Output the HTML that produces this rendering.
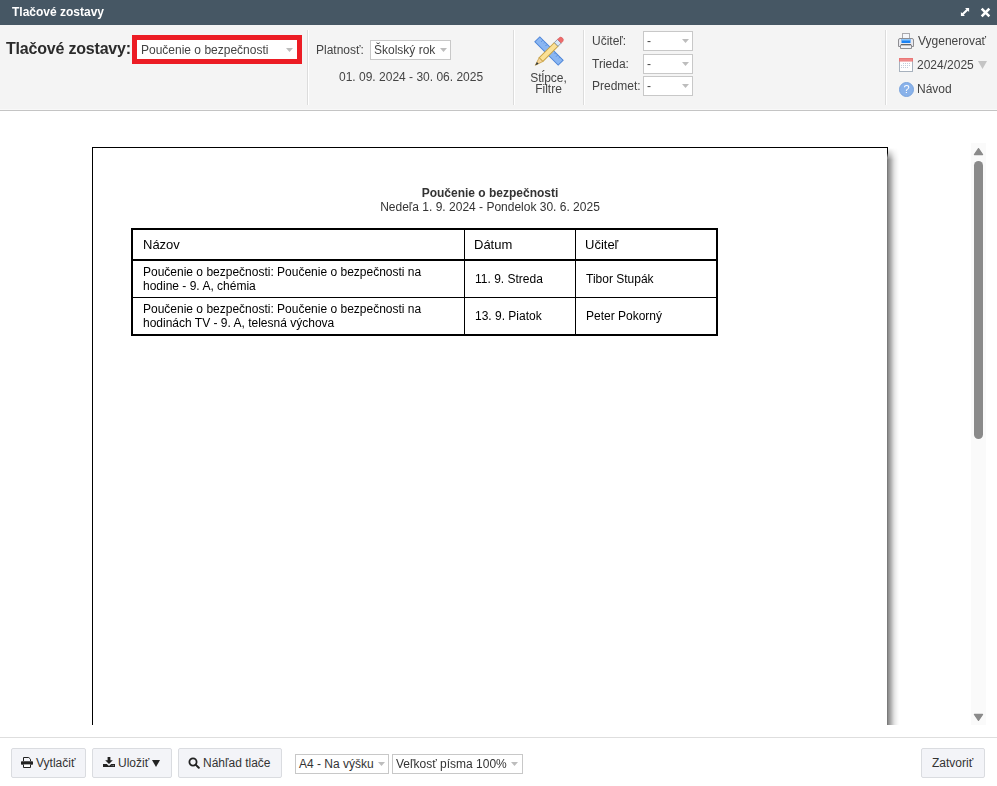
<!DOCTYPE html>
<html><head><meta charset="utf-8">
<style>
*{box-sizing:border-box;margin:0;padding:0}
html,body{width:997px;height:786px;overflow:hidden;background:#fff;font-family:"Liberation Sans",sans-serif;font-size:12px;color:#333}
.a{position:absolute;white-space:nowrap}
.gl{position:absolute;left:0;top:0;width:997px;height:786px;will-change:transform}
.t12{position:absolute;white-space:nowrap;font-size:12px;line-height:14px;color:#444}
.sep{position:absolute;width:2px;top:30px;height:75px;border-left:1px solid #dcdcdc;border-right:1px solid #fff}
.box{position:absolute;background:#fff;border:1px solid #c8c8c8}
.arr{position:absolute;width:7px;height:4px;background:#bdbdbd;clip-path:polygon(0 0,100% 0,50% 100%)}
.blk{position:absolute;background:#000}
.tx13{position:absolute;white-space:nowrap;font-size:13px;line-height:15px;color:#000}
.tx12{position:absolute;white-space:nowrap;font-size:12px;line-height:14px;color:#000}
.btn{position:absolute;top:748px;height:30px;background:#f3f4f8;border:1px solid #dadce0;border-radius:2px}
.ft{position:absolute;white-space:nowrap;font-size:12px;line-height:14px;color:#333}
</style></head><body>
<!-- background layers -->
<div class="a" style="left:0;top:0;width:997px;height:25px;background:#465764"></div>
<div class="a" style="left:0;top:25px;width:997px;height:85px;background:#f4f4f4"></div>
<div class="a" style="left:0;top:109px;width:997px;height:1px;background:#f9f9f9"></div>
<div class="a" style="left:0;top:110px;width:997px;height:1px;background:#c4c4c4"></div>
<div class="a" style="left:0;top:737px;width:997px;height:1px;background:#dedede"></div>

<div class="gl">
  <!-- title bar -->
  <div class="a" style="left:12px;top:5px;font-weight:bold;font-size:12px;line-height:14px;color:#fff">Tlačové zostavy</div>
  <svg class="a" style="left:960px;top:7px" width="10" height="10" viewBox="0 0 10 10"><path d="M5 0.9H9.1V5L7.8 3.7L3.7 7.8L5 9.1H0.9V5L2.2 6.3L6.3 2.2Z" fill="#fff"/></svg>
  <svg class="a" style="left:980px;top:7px" width="11" height="11" viewBox="0 0 11 11"><path d="M2.6 2.6L8.4 8.4M8.4 2.6L2.6 8.4" stroke="#fff" stroke-width="2.6" stroke-linecap="square"/></svg>

  <!-- toolbar -->
  <div class="a" style="left:6px;top:40px;font-size:16px;font-weight:bold;color:#2b2b2b;letter-spacing:-0.2px;line-height:18px">Tlačové zostavy:</div>
  <div class="a" style="left:132px;top:35px;width:170px;height:29px;border:5px solid #ec1c24;background:#fff"></div>
  <div class="t12" style="left:141px;top:43px">Poučenie o bezpečnosti</div>
  <div class="arr" style="left:286px;top:48px"></div>
  <div class="sep" style="left:307px"></div>

  <div class="t12" style="left:316px;top:43px">Platnosť:</div>
  <div class="box" style="left:370px;top:40px;width:81px;height:20px"></div>
  <div class="t12" style="left:374px;top:43px">Školský rok</div>
  <div class="arr" style="left:440px;top:48px"></div>
  <div class="t12" style="left:339px;top:70px">01. 09. 2024 - 30. 06. 2025</div>
  <div class="sep" style="left:513px"></div>

  <svg class="a" style="left:532px;top:34px" width="34" height="34" viewBox="0 0 34 34">
    <g transform="translate(17 17) rotate(45)">
      <rect x="-16.5" y="-3.5" width="33" height="7" fill="#8ab6f2" stroke="#4f86d8" stroke-width="1"/>
      <path d="M-12 -3V-1M-9 -3V-1.8M-6 -3V-1M6 -3V-1.8M9 -3V-1M12 -3V-1.8" stroke="#4f86d8" stroke-width="0.8"/>
    </g>
    <g transform="translate(17.1 17.5) rotate(-45)">
      <rect x="-11.5" y="-2.6" width="21.5" height="5.2" fill="#fbe196" stroke="#c9a347" stroke-width="1"/>
      <path d="M-11.5 -2.6L-19.5 0L-11.5 2.6Z" fill="#f7d49a" stroke="#c9a347" stroke-width="0.8" stroke-linejoin="round"/>
      <path d="M-19.5 0L-16 -1.2L-16 1.2Z" fill="#2b3440"/>
      <rect x="10" y="-2.6" width="4.5" height="5.2" fill="#d5e6f7" stroke="#7f8f9f" stroke-width="0.8"/>
      <path d="M14.5 -2.6H16.6A2.4 2.6 0 0 1 16.6 2.6H14.5Z" fill="#ee6b6b" stroke="#d25454" stroke-width="0.5"/>
    </g>
  </svg>
  <div class="t12" style="left:519px;top:73px;width:59px;text-align:center;line-height:11px;color:#444">Stĺpce,<br>Filtre</div>
  <div class="sep" style="left:583px"></div>

  <div class="t12" style="left:592px;top:34px">Učiteľ:</div>
  <div class="t12" style="left:592px;top:57px">Trieda:</div>
  <div class="t12" style="left:592px;top:79px">Predmet:</div>
  <div class="box" style="left:643px;top:31px;width:50px;height:20px"></div>
  <div class="t12" style="left:647px;top:34px">-</div>
  <div class="arr" style="left:682px;top:39px"></div>
  <div class="box" style="left:643px;top:54px;width:50px;height:20px"></div>
  <div class="t12" style="left:647px;top:57px">-</div>
  <div class="arr" style="left:682px;top:62px"></div>
  <div class="box" style="left:643px;top:76px;width:50px;height:20px"></div>
  <div class="t12" style="left:647px;top:79px">-</div>
  <div class="arr" style="left:682px;top:84px"></div>
  <div class="sep" style="left:885px"></div>

  <!-- printer icon -->
  <svg class="a" style="left:897px;top:32px" width="18" height="18" viewBox="0 0 18 18">
    <rect x="5.5" y="1.5" width="7" height="6" fill="#f4f6fa" stroke="#a9a9ad"/>
    <path d="M3 6.5H15A1.5 1.5 0 0 1 16.5 8V14.5H1.5V8A1.5 1.5 0 0 1 3 6.5Z" fill="#e9e9ef" stroke="#8e8e92"/>
    <rect x="4.5" y="7" width="9" height="4" fill="#1b82f4"/>
    <rect x="4.5" y="7" width="9" height="1.5" fill="#8cc6fb"/>
    <rect x="4" y="12" width="10" height="1.2" fill="#444"/>
    <path d="M3.5 13H14.5V16.5H3.5Z" fill="#f2f2f5" stroke="#8e8e92"/>
  </svg>
  <div class="t12" style="left:918px;top:34px">Vygenerovať</div>
  <!-- calendar icon -->
  <svg class="a" style="left:899px;top:58px" width="14" height="14" viewBox="0 0 14 14">
    <rect x="0.5" y="0.5" width="13" height="13" fill="#fff" stroke="#a7b1bd"/>
    <rect x="0" y="0" width="14" height="3.5" fill="#ea7777"/><rect x="1" y="1.5" width="12" height="1" fill="#f29a9a"/>
    <path d="M4 5.5H12M2 7.5H12M2 9.5H10" stroke="#c3cedb" stroke-width="1" stroke-dasharray="1 1"/>
  </svg>
  <div class="t12" style="left:917px;top:58px">2024/2025</div>
  <div class="a" style="left:978px;top:61px;width:9px;height:8px;background:#c4c4c4;clip-path:polygon(0 0,100% 0,50% 100%)"></div>
  <div class="a" style="left:898.5px;top:81.5px;width:15.2px;height:15.2px;border-radius:50%;background:#89b2ea;border:1px solid #79a3dd"></div>
  <div class="a" style="left:899px;top:83px;width:15px;text-align:center;font-size:11px;line-height:13px;color:#fff">?</div>
  <div class="t12" style="left:917px;top:82px">Návod</div>

  <!-- content: page -->
  <div class="a" style="left:92px;top:147px;width:795px;height:578px;border-left:1px solid #000;border-top:1px solid #000;background:#fff"></div>
  <div class="a" style="left:887px;top:148px;width:13px;height:577px;background:linear-gradient(to right,#7a7a7a 0.5px,#8f8f8f 1.5px,#9c9c9c 2.5px,#aaaaaa 3.5px,#b9b9b9 4.5px,#c9c9c9 5.5px,#d8d8d8 6.5px,#e4e4e4 7.5px,#ececec 8.5px,#f2f2f2 9.5px,#f8f8f8 10.5px,#fcfcfc 11.5px,#fff 12.5px);-webkit-mask-image:linear-gradient(to bottom,transparent 0,rgba(0,0,0,.5) 6px,#000 12px)"></div>
  <div class="a" style="left:887px;top:147px;width:1px;height:11px;background:linear-gradient(to bottom,#000 0,#000 6px,rgba(0,0,0,0) 11px)"></div>
  <div class="a" style="left:92px;top:186px;width:796px;text-align:center;font-weight:bold;color:#333;line-height:14px">Poučenie o bezpečnosti</div>
  <div class="a" style="left:92px;top:200px;width:796px;text-align:center;color:#333;line-height:14px">Nedeľa 1. 9. 2024 - Pondelok 30. 6. 2025</div>

  <div class="a" style="left:131px;top:228px;width:587px;height:108px;border:2px solid #000"></div>
  <div class="blk" style="left:131px;top:259px;width:587px;height:2px"></div>
  <div class="blk" style="left:131px;top:297px;width:587px;height:1px"></div>
  <div class="blk" style="left:464px;top:228px;width:1px;height:108px"></div>
  <div class="blk" style="left:575px;top:228px;width:1px;height:108px"></div>
  <div class="tx13" style="left:143px;top:237px">Názov</div>
  <div class="tx13" style="left:474px;top:237px">Dátum</div>
  <div class="tx13" style="left:585px;top:237px">Učiteľ</div>
  <div class="tx12" style="left:143px;top:265px">Poučenie o bezpečnosti: Poučenie o bezpečnosti na<br>hodine - 9. A, chémia</div>
  <div class="tx12" style="left:475px;top:272px">11. 9. Streda</div>
  <div class="tx12" style="left:586px;top:272px">Tibor Stupák</div>
  <div class="tx12" style="left:143px;top:302px">Poučenie o bezpečnosti: Poučenie o bezpečnosti na<br>hodinách TV - 9. A, telesná výchova</div>
  <div class="tx12" style="left:475px;top:309px">13. 9. Piatok</div>
  <div class="tx12" style="left:586px;top:309px">Peter Pokorný</div>

  <!-- scrollbar -->
  <div class="a" style="left:971px;top:143px;width:15px;height:582px;background:#fafafa"></div>
  <svg class="a" style="left:973px;top:147px" width="11" height="10" viewBox="0 0 11 10"><path d="M5.5 1.6L9.6 7.6H1.4Z" fill="#8a8a8a" stroke="#8a8a8a" stroke-width="1.2" stroke-linejoin="round"/></svg>
  <div class="a" style="left:974px;top:161px;width:9px;height:278px;border-radius:4.5px;background:#8a8a8a"></div>
  <svg class="a" style="left:973px;top:712px" width="11" height="10" viewBox="0 0 11 10"><path d="M5.5 8.4L9.6 2.4H1.4Z" fill="#8a8a8a" stroke="#8a8a8a" stroke-width="1.2" stroke-linejoin="round"/></svg>
</div>

<!-- footer (LCD text) -->
<div class="btn" style="left:11px;width:75px"></div>
<svg class="a" style="left:21px;top:757px" width="12" height="11" viewBox="0 0 12 11"><path d="M2.5 4V0.5H7.8L9.5 2.2V4" fill="none" stroke="#222" stroke-width="1"/><rect x="0" y="4.2" width="12" height="3.6" rx="0.8" fill="#222"/><path d="M2.5 7.5V10.5H9.5V7.5" fill="#fff" stroke="#222" stroke-width="1"/></svg>
<div class="ft" style="left:36px;top:756px">Vytlačiť</div>
<div class="btn" style="left:92px;width:80px"></div>
<svg class="a" style="left:103px;top:757px" width="12" height="10" viewBox="0 0 12 10"><path d="M4.6 0H7.4V3.2H9.8L6 7L2.2 3.2H4.6Z" fill="#222"/><path d="M0 7H3.8L6 9.1L8.2 7H12V10H0Z" fill="#222"/><rect x="8.6" y="8.2" width="0.9" height="0.9" fill="#9a9a9a"/><rect x="10" y="8.2" width="0.9" height="0.9" fill="#9a9a9a"/></svg>
<div class="ft" style="left:118px;top:756px">Uložiť</div>
<div class="a" style="left:152px;top:760px;width:0;height:0;border-left:4px solid transparent;border-right:4px solid transparent;border-top:7px solid #222"></div>
<div class="btn" style="left:178px;width:104px"></div>
<svg class="a" style="left:188px;top:757px" width="12" height="12" viewBox="0 0 12 12"><circle cx="5" cy="5" r="3.6" fill="none" stroke="#222" stroke-width="1.8"/><path d="M7.6 7.6L10.8 10.8" stroke="#222" stroke-width="2" stroke-linecap="round"/></svg>
<div class="ft" style="left:203px;top:756px">Náhľad tlače</div>
<div class="box" style="left:295px;top:754px;width:94px;height:20px"></div>
<div class="ft" style="left:299px;top:757px">A4 - Na výšku</div>
<div class="arr" style="left:378px;top:762px"></div>
<div class="box" style="left:392px;top:754px;width:131px;height:20px"></div>
<div class="ft" style="left:396px;top:757px">Veľkosť písma 100%</div>
<div class="arr" style="left:511px;top:762px"></div>
<div class="btn" style="left:921px;width:64px"></div>
<div class="ft" style="left:932px;top:756px">Zatvoriť</div>
</body></html>
